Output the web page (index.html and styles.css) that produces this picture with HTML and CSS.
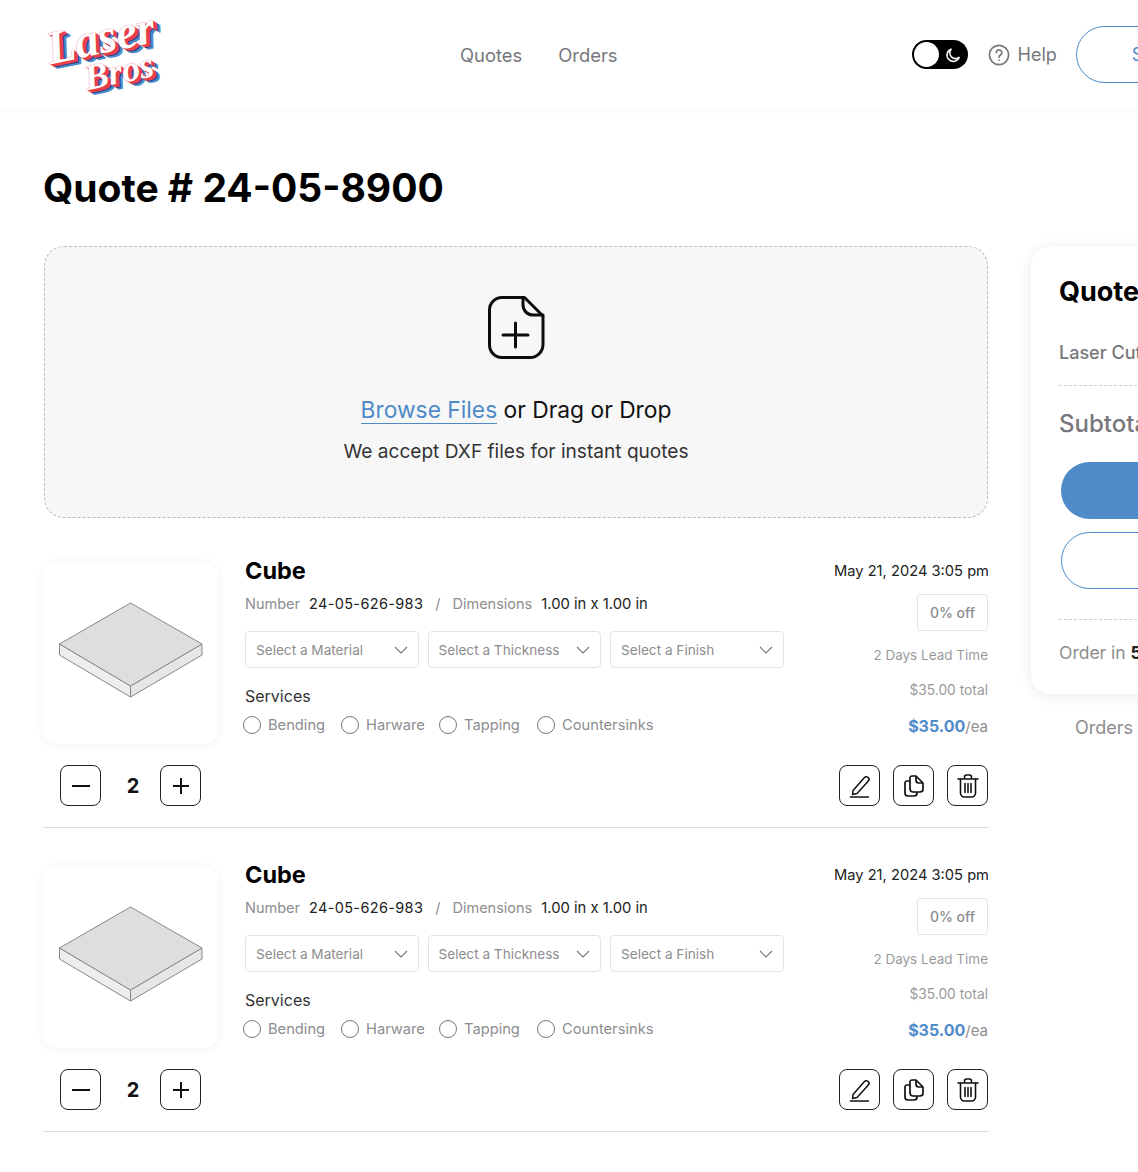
FILE: index.html
```html
<!DOCTYPE html>
<html lang="en">
<head>
    <meta charset="UTF-8">
    <meta name="viewport" content="width=device-width, initial-scale=1.0">
    <title>Quote # 24-05-8900</title>
    <link rel="stylesheet" href="styles.css">
</head>
<body>
    <header class="topbar">
        <a class="logo" href="#">
            <span class="logo-line">Laser</span>
            <span class="logo-line logo-line-two">Bros</span>
        </a>
        <nav class="nav">
            <a href="#">Quotes</a>
            <a href="#">Orders</a>
        </nav>
        <div class="top-actions">
            <div class="toggle">
                <span class="toggle-knob"></span>
                <svg width="18" height="18" viewBox="0 0 18 18" fill="none" stroke="#eee" stroke-width="1.600"><path d="M7.500 3a6.300 6.300 0 1 0 7.800 8A5.400 5.400 0 0 1 7.500 3z"/></svg>
            </div>
            <a class="help" href="#">
                <svg width="22" height="22" viewBox="0 0 22 22" fill="none" stroke="#77777c" stroke-width="1.700" stroke-linecap="round"><circle cx="11" cy="11" r="9.600"/><path d="M8.200 8.600a2.800 2.800 0 1 1 4.300 2.400c-1 .6-1.500 1.100-1.500 2.200"/><path d="M11 16.100v.1"/></svg>
                Help
            </a>
            <a class="signin" href="#">Sign In</a>
        </div>
    </header>

    <main class="page">
        <h1>Quote # 24-05-8900</h1>
        <div class="columns">
            <section class="quote-list">
                <div class="dropzone">
                    <svg width="57" height="63" viewBox="0 0 57 63" fill="none" stroke="#0c0c0e" stroke-width="3" stroke-linecap="round" stroke-linejoin="round">
                        <path d="M14 1.500h22.500L55 20v28.500A13 13 0 0 1 42 61.500H14A12.500 12.500 0 0 1 1.500 49V14A12.500 12.500 0 0 1 14 1.500z"/>
                        <path d="M35 2v7a10 10 0 0 0 10 10h10"/>
                        <path d="M27.500 27v24M15 39h25"/>
                    </svg>
                    <p class="drop-title"><a href="#">Browse Files</a> or Drag or Drop</p>
                    <p class="drop-note">We accept DXF files for instant quotes</p>
                </div>

                <article class="item">
                    <div class="item-left">
                        <div class="thumb">
                            <svg width="175" height="182" viewBox="0 0 175 182" stroke="#88888b" stroke-width="1" stroke-linejoin="round">
                                <path d="M16.500 82l71 42v11l-71-42z" fill="#eeeeee"/>
                                <path d="M159 82l-71.500 42v11L159 93z" fill="#e6e6e6"/>
                                <path d="M87.500 41L159 82l-71.500 42-71-42z" fill="#dedede"/>
                            </svg>
                        </div>
                        <div class="qty">
                            <button class="icon-btn" type="button"><svg width="20" height="20" viewBox="0 0 20 20" stroke="#111" stroke-width="2"><path d="M1 10h18"/></svg></button>
                            <span class="qty-value">2</span>
                            <button class="icon-btn" type="button"><svg width="20" height="20" viewBox="0 0 20 20" stroke="#111" stroke-width="2"><path d="M2 10h16M10 2v16"/></svg></button>
                        </div>
                    </div>
                    <div class="item-main">
                        <h2>Cube</h2>
                        <div class="meta">
                            <span class="meta-label">Number</span><span class="meta-value num">24-05-626-983</span>
                            <span class="meta-slash">/</span>
                            <span class="meta-label">Dimensions</span><span class="meta-value dim">1.00 in x 1.00 in</span>
                        </div>
                        <div class="selects">
                            <div class="select">Select a Material<svg width="14" height="8" viewBox="0 0 14 8" fill="none" stroke="#77777c" stroke-width="1.100"><path d="M1 1l6 6 6-6"/></svg></div>
                            <div class="select">Select a Thickness<svg width="14" height="8" viewBox="0 0 14 8" fill="none" stroke="#77777c" stroke-width="1.100"><path d="M1 1l6 6 6-6"/></svg></div>
                            <div class="select">Select a Finish<svg width="14" height="8" viewBox="0 0 14 8" fill="none" stroke="#77777c" stroke-width="1.100"><path d="M1 1l6 6 6-6"/></svg></div>
                        </div>
                        <div class="services-title">Services</div>
                        <div class="services">
                            <label class="radio"><span class="radio-dot"></span>Bending</label>
                            <label class="radio"><span class="radio-dot"></span>Harware</label>
                            <label class="radio"><span class="radio-dot"></span>Tapping</label>
                            <label class="radio"><span class="radio-dot"></span>Countersinks</label>
                        </div>
                    </div>
                    <div class="item-right">
                        <div class="date">May 21, 2024 3:05 pm</div>
                        <div class="badge">0% off</div>
                        <div class="lead">2 Days Lead Time</div>
                        <div class="total">$35.00 total</div>
                        <div class="price"><strong>$35.00</strong>/ea</div>
                        <div class="actions">
                            <button class="icon-btn" type="button"><svg width="22" height="24" viewBox="0 0 22 24" fill="none" stroke="#111" stroke-width="1.500" stroke-linejoin="round" stroke-linecap="round"><path d="M4 16.500L15.500 3.500a2.300 2.300 0 0 1 3.300-.2l.5.500a2.300 2.300 0 0 1 .1 3.200L8 19.500l-4.500 1z"/><path d="M1.500 23h18"/></svg></button>
                            <button class="icon-btn" type="button"><svg width="20" height="22" viewBox="0 0 20 22" fill="none" stroke="#111" stroke-width="1.700" stroke-linejoin="round"><path d="M6 6H3a2 2 0 0 0-2 2v10a3 3 0 0 0 3 3h6a3 3 0 0 0 3-3v-1"/><path d="M8 1h4l7 7v6a3 3 0 0 1-3 3H9a3 3 0 0 1-3-3V3a2 2 0 0 1 2-2z"/><path d="M12 1v4a3 3 0 0 0 3 3h4"/></svg></button>
                            <button class="icon-btn" type="button"><svg width="22" height="24" viewBox="0 0 22 24" fill="none" stroke="#111" stroke-width="1.600" stroke-linecap="round" stroke-linejoin="round"><path d="M1 5h20M7.500 5V3a2 2 0 0 1 2-2h3a2 2 0 0 1 2 2v2"/><path d="M3.500 5v14a4 4 0 0 0 4 4h7a4 4 0 0 0 4-4V5"/><path d="M8 9.500v9M11 9.500v9M14 9.500v9"/></svg></button>
                        </div>
                    </div>
                </article>

                <article class="item">
                    <div class="item-left">
                        <div class="thumb">
                            <svg width="175" height="182" viewBox="0 0 175 182" stroke="#88888b" stroke-width="1" stroke-linejoin="round">
                                <path d="M16.500 82l71 42v11l-71-42z" fill="#eeeeee"/>
                                <path d="M159 82l-71.500 42v11L159 93z" fill="#e6e6e6"/>
                                <path d="M87.500 41L159 82l-71.500 42-71-42z" fill="#dedede"/>
                            </svg>
                        </div>
                        <div class="qty">
                            <button class="icon-btn" type="button"><svg width="20" height="20" viewBox="0 0 20 20" stroke="#111" stroke-width="2"><path d="M1 10h18"/></svg></button>
                            <span class="qty-value">2</span>
                            <button class="icon-btn" type="button"><svg width="20" height="20" viewBox="0 0 20 20" stroke="#111" stroke-width="2"><path d="M2 10h16M10 2v16"/></svg></button>
                        </div>
                    </div>
                    <div class="item-main">
                        <h2>Cube</h2>
                        <div class="meta">
                            <span class="meta-label">Number</span><span class="meta-value num">24-05-626-983</span>
                            <span class="meta-slash">/</span>
                            <span class="meta-label">Dimensions</span><span class="meta-value dim">1.00 in x 1.00 in</span>
                        </div>
                        <div class="selects">
                            <div class="select">Select a Material<svg width="14" height="8" viewBox="0 0 14 8" fill="none" stroke="#77777c" stroke-width="1.100"><path d="M1 1l6 6 6-6"/></svg></div>
                            <div class="select">Select a Thickness<svg width="14" height="8" viewBox="0 0 14 8" fill="none" stroke="#77777c" stroke-width="1.100"><path d="M1 1l6 6 6-6"/></svg></div>
                            <div class="select">Select a Finish<svg width="14" height="8" viewBox="0 0 14 8" fill="none" stroke="#77777c" stroke-width="1.100"><path d="M1 1l6 6 6-6"/></svg></div>
                        </div>
                        <div class="services-title">Services</div>
                        <div class="services">
                            <label class="radio"><span class="radio-dot"></span>Bending</label>
                            <label class="radio"><span class="radio-dot"></span>Harware</label>
                            <label class="radio"><span class="radio-dot"></span>Tapping</label>
                            <label class="radio"><span class="radio-dot"></span>Countersinks</label>
                        </div>
                    </div>
                    <div class="item-right">
                        <div class="date">May 21, 2024 3:05 pm</div>
                        <div class="badge">0% off</div>
                        <div class="lead">2 Days Lead Time</div>
                        <div class="total">$35.00 total</div>
                        <div class="price"><strong>$35.00</strong>/ea</div>
                        <div class="actions">
                            <button class="icon-btn" type="button"><svg width="22" height="24" viewBox="0 0 22 24" fill="none" stroke="#111" stroke-width="1.500" stroke-linejoin="round" stroke-linecap="round"><path d="M4 16.500L15.500 3.500a2.300 2.300 0 0 1 3.300-.2l.5.500a2.300 2.300 0 0 1 .1 3.200L8 19.500l-4.500 1z"/><path d="M1.500 23h18"/></svg></button>
                            <button class="icon-btn" type="button"><svg width="20" height="22" viewBox="0 0 20 22" fill="none" stroke="#111" stroke-width="1.700" stroke-linejoin="round"><path d="M6 6H3a2 2 0 0 0-2 2v10a3 3 0 0 0 3 3h6a3 3 0 0 0 3-3v-1"/><path d="M8 1h4l7 7v6a3 3 0 0 1-3 3H9a3 3 0 0 1-3-3V3a2 2 0 0 1 2-2z"/><path d="M12 1v4a3 3 0 0 0 3 3h4"/></svg></button>
                            <button class="icon-btn" type="button"><svg width="22" height="24" viewBox="0 0 22 24" fill="none" stroke="#111" stroke-width="1.600" stroke-linecap="round" stroke-linejoin="round"><path d="M1 5h20M7.500 5V3a2 2 0 0 1 2-2h3a2 2 0 0 1 2 2v2"/><path d="M3.500 5v14a4 4 0 0 0 4 4h7a4 4 0 0 0 4-4V5"/><path d="M8 9.500v9M11 9.500v9M14 9.500v9"/></svg></button>
                        </div>
                    </div>
                </article>
            </section>

            <aside class="sidebar">
                <div class="summary">
                    <h3>Quote Summary</h3>
                    <div class="summary-row">Laser Cutting</div>
                    <div class="summary-total">Subtotal</div>
                    <div class="btn-fill"></div>
                    <div class="btn-line"></div>
                    <div class="summary-note">Order in <strong>5 hours</strong></div>
                </div>
                <p class="sidebar-note">Orders are shipped daily</p>
            </aside>
        </div>
    </main>
</body>
</html>
```

FILE: styles.css
```css
* {
    box-sizing: border-box;
}

html,
body {
    margin: 0;
    padding: 0;
    overflow-x: hidden;
}

body {
    font-family: Inter, "Liberation Sans", sans-serif;
    background-color: #fff;
    color: #111;
    width: 1138px;
    height: 1172px;
    overflow: hidden;
}

a {
    text-decoration: none;
    color: inherit;
}

p,
h1,
h2,
h3 {
    margin: 0;
    color: #000;
}

/* Top bar */
.topbar {
    display: flex;
    align-items: center;
    height: 109px;
    width: 1400px;
    padding-left: 43px;
    box-shadow: 0 1px 6px rgba(0, 0, 0, 0.05);
}

.logo {
    display: flex;
    flex-direction: column;
    align-items: center;
    width: 122px;
    height: 80px;
    font-family: "Liberation Serif", serif;
    font-style: italic;
    font-weight: 700;
    color: #fff;
    transform: rotate(-12deg);
    -webkit-text-stroke: 3px #fff;
    paint-order: stroke fill;
    text-shadow: 0 0 1px #e8404a, 1px 1px 0 #e8404a, 2px 2px 0 #e8404a, 3px 3px 0 #e8404a, 4px 4px 0 #1d3f7e, 5px 5px 0 #4f8bc9, 6px 6px 0 #4f8bc9;
}

.logo-line {
    font-size: 47px;
    line-height: 44px;
}

.logo-line-two {
    font-size: 36px;
    line-height: 30px;
    margin-left: 22px;
}

.nav {
    display: flex;
    gap: 36px;
    margin-left: 295px;
    font-size: 18.400px;
    color: #77777c;
}

.top-actions {
    display: flex;
    align-items: center;
    margin-left: 294px;
}

.toggle {
    display: flex;
    align-items: center;
    justify-content: space-between;
    width: 56px;
    height: 29px;
    padding: 0 6px 0 2px;
    background-color: #000;
    border-radius: 15px;
}

.toggle-knob {
    width: 25px;
    height: 25px;
    background-color: #fff;
    border-radius: 50%;
}

.help {
    display: flex;
    align-items: center;
    gap: 8px;
    margin-left: 20px;
    font-size: 18px;
    color: #77777c;
}

.signin {
    display: block;
    width: 180px;
    height: 57px;
    margin-left: 19px;
    padding-top: 17px;
    padding-left: 55px;
    border: 1px solid #4f8bc9;
    border-radius: 29px;
    color: #4f8bc9;
    font-size: 18px;
}

/* Page */
.page {
    width: 1400px;
    padding-left: 44px;
}

h1 {
    margin-top: 55px;
    margin-left: -1px;
    font-size: 39px;
    line-height: 48px;
    font-weight: 700;
}

.columns {
    display: flex;
    align-items: flex-start;
    gap: 42px;
    margin-top: 34px;
}

.quote-list {
    width: 945px;
    flex-shrink: 0;
}

.dropzone {
    display: flex;
    flex-direction: column;
    align-items: center;
    width: 944px;
    height: 272px;
    padding-top: 49px;
    background-color: #f7f7f7;
    border: 1px dashed #bbb;
    border-radius: 20px;
}

.drop-title {
    margin-top: 36px;
    font-size: 22.800px;
    line-height: 30px;
    color: #111;
}

.drop-title a {
    color: #4f8bc9;
    border-bottom: 1px solid #4f8bc9;
}

.drop-note {
    margin-top: 14px;
    font-size: 19.100px;
    line-height: 24px;
    color: #333;
}

/* Quote items */
.item {
    display: flex;
    height: 266px;
    margin-top: 38px;
    margin-left: -1px;
    border-bottom: 1px solid #dedede;
}

.dropzone + .item {
    margin-top: 44px;
}

.item-left {
    width: 175px;
    flex-shrink: 0;
}

.thumb {
    height: 182px;
    background-color: #fff;
    border-radius: 14px;
    box-shadow: 0 1px 10px rgba(0, 0, 0, 0.06);
}

.qty {
    display: flex;
    align-items: center;
    margin-top: 21px;
    margin-left: 17px;
}

.qty-value {
    width: 59px;
    padding-left: 5px;
    text-align: center;
    font-size: 20px;
    font-weight: 700;
}

.icon-btn {
    display: flex;
    align-items: center;
    justify-content: center;
    width: 41px;
    height: 41px;
    padding: 0;
    background-color: #fff;
    border: 1px solid #222;
    border-radius: 8px;
}

.item-main {
    width: 560px;
    margin-left: 27px;
}

h2 {
    font-size: 23.500px;
    line-height: 18px;
    font-weight: 700;
}

.meta {
    display: flex;
    align-items: center;
    margin-top: 15px;
    font-size: 14.500px;
    line-height: 18px;
    white-space: nowrap;
}

.meta-label {
    color: #8d8d90;
}

.meta-value {
    margin-left: 9px;
    color: #222;
}

.num {
    letter-spacing: 0.350px;
}

.dim {
    margin-left: 9px;
    font-size: 14.800px;
}

.meta-slash {
    margin: 0 12px 0 12px;
    color: #8d8d90;
}

.selects {
    display: flex;
    gap: 9px;
    margin-top: 18px;
}

.select {
    display: flex;
    align-items: center;
    justify-content: space-between;
    width: 173.500px;
    height: 37px;
    padding: 0 10px 0 10px;
    border: 1px solid #e4e4e4;
    border-radius: 4px;
    font-size: 13.600px;
    color: #8d8d90;
}

.services-title {
    margin-top: 18px;
    font-size: 16px;
    line-height: 20px;
    color: #333;
}

.services {
    display: flex;
    margin-top: 9px;
    margin-left: -2px;
}

.radio {
    display: flex;
    align-items: center;
    gap: 7px;
    width: 98px;
    font-size: 14.700px;
    line-height: 20px;
    color: #8d8d90;
    white-space: nowrap;
}

.radio-dot {
    flex-shrink: 0;
    width: 18px;
    height: 18px;
    border: 1.500px solid #77777c;
    border-radius: 50%;
}

.item-right {
    flex-grow: 1;
    display: flex;
    flex-direction: column;
    align-items: flex-end;
    padding-right: 1px;
}

.date {
    margin-right: -1px;
    font-size: 14.700px;
    line-height: 18px;
    color: #222;
    white-space: nowrap;
}

.badge {
    display: flex;
    align-items: center;
    justify-content: center;
    width: 71px;
    height: 37px;
    margin-top: 14px;
    border: 1px solid #e4e4e4;
    border-radius: 4px;
    font-size: 14px;
    font-weight: 500;
    color: #8d8d90;
}

.lead,
.total {
    font-size: 13.800px;
    line-height: 18px;
    color: #9a9a9d;
    white-space: nowrap;
}

.lead {
    margin-top: 15px;
    font-size: 13.500px;
}

.total {
    margin-top: 17px;
}

.price {
    margin-top: 17px;
    font-size: 15px;
    line-height: 20px;
    color: #8d8d90;
}

.price strong {
    font-size: 16px;
    font-weight: 700;
    color: #4f8bc9;
}

.actions {
    display: flex;
    gap: 13px;
    margin-top: 28px;
}

/* Summary card */
.sidebar {
    width: 320px;
    flex-shrink: 0;
}

.summary {
    height: 448px;
    padding: 28px;
    background-color: #fff;
    border-radius: 20px;
    box-shadow: 0 2px 14px rgba(0, 0, 0, 0.09);
}

h3 {
    font-size: 27px;
    line-height: 36px;
    font-weight: 700;
    white-space: nowrap;
}

.summary-row {
    margin-top: 31px;
    padding-bottom: 20px;
    border-bottom: 1px dashed #ccc;
    font-size: 18px;
    line-height: 24px;
    font-weight: 500;
    color: #77777c;
    white-space: nowrap;
}

.summary-total {
    margin-top: 22px;
    font-size: 24px;
    line-height: 32px;
    font-weight: 500;
    color: #77777c;
    white-space: nowrap;
}

.btn-fill,
.btn-line {
    margin-left: 2px;
    height: 57px;
    border-radius: 29px;
}

.btn-fill {
    margin-top: 22px;
    background-color: #4f8bc9;
}

.btn-line {
    margin-top: 13px;
    border: 1px solid #4f8bc9;
}

.summary-note {
    margin-top: 30px;
    padding-top: 21px;
    border-top: 1px dashed #ccc;
    font-size: 17.500px;
    line-height: 24px;
    color: #8d8d90;
    white-space: nowrap;
}

.summary-note strong {
    color: #222;
}

.sidebar-note {
    margin-top: 22px;
    margin-left: 44px;
    font-size: 18px;
    line-height: 24px;
    color: #8d8d90;
    white-space: nowrap;
}
```
